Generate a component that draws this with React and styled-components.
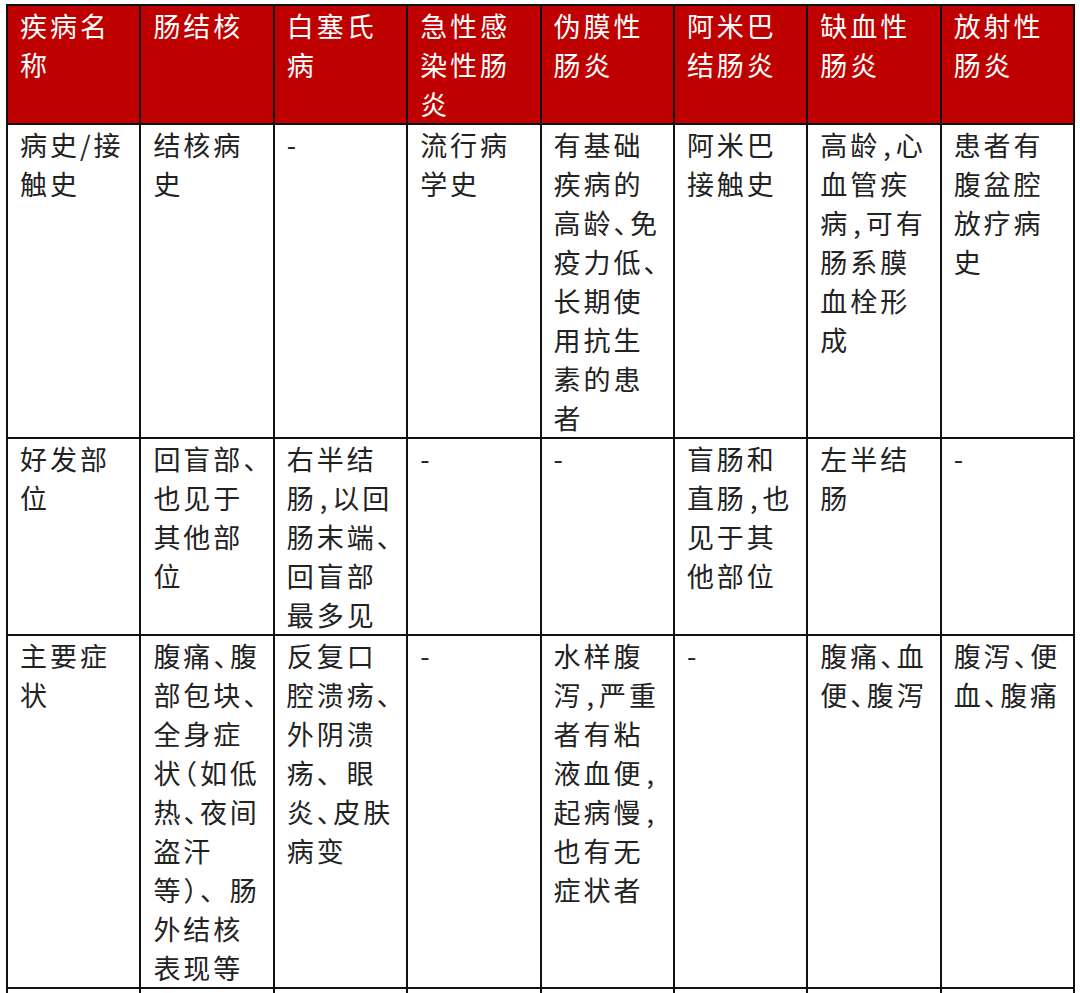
import React from "react";
import styled, { createGlobalStyle } from "styled-components";

const GlobalStyle = createGlobalStyle`
  html, body {
    margin: 0;
    padding: 0;
    background: #fff;
    overflow: hidden;
  }
  body {
    font-family: "Noto Sans CJK SC", "Noto Sans", sans-serif;
  }
`;

const headers = [
  ["疾病名", "称"],
  ["肠结核"],
  ["白塞氏", "病"],
  ["急性感", "染性肠", "炎"],
  ["伪膜性", "肠炎"],
  ["阿米巴", "结肠炎"],
  ["缺血性", "肠炎"],
  ["放射性", "肠炎"],
];

const rows = [
  [
    ["病史/接", "触史"],
    ["结核病", "史"],
    ["-"],
    ["流行病", "学史"],
    ["有基础", "疾病的", "高龄{、}免", "疫力低{、}", "长期使", "用抗生", "素的患", "者"],
    ["阿米巴", "接触史"],
    ["高龄{,}心", "血管疾", "病{,}可有", "肠系膜", "血栓形", "成"],
    ["患者有", "腹盆腔", "放疗病", "史"],
  ],
  [
    ["好发部", "位"],
    ["回盲部{、}", "也见于", "其他部", "位"],
    ["右半结", "肠{,}以回", "肠末端{、}", "回盲部", "最多见"],
    ["-"],
    ["-"],
    ["盲肠和", "直肠{,}也", "见于其", "他部位"],
    ["左半结", "肠"],
    ["-"],
  ],
  [
    ["主要症", "状"],
    ["腹痛{、}腹", "部包块{、}", "全身症", "状{（}如低", "热{、}夜间", "盗汗", "等{）}、肠", "外结核", "表现等"],
    ["反复口", "腔溃疡{、}", "外阴溃", "疡、眼", "炎{、}皮肤", "病变"],
    ["-"],
    ["水样腹", "泻{,}严重", "者有粘", "液血便{,}", "起病慢{,}", "也有无", "症状者"],
    ["-"],
    ["腹痛{、}血", "便{、}腹泻"],
    ["腹泻{、}便", "血{、}腹痛"],
  ],
  [[], [], [], [], [], [], [], []],
];

const Table = styled.table`
  margin: 4px 0 0 6px;
  width: 1069px;
  table-layout: fixed;
  border-collapse: collapse;
  border: 2px solid #111;
`;

const HeadCell = styled.th`
  background: #bf0000;
  color: #fff;
  font-weight: 400;
  text-align: left;
  vertical-align: top;
  border: 2px solid #111;
  padding: 0 10px 0 12px;
  font-size: 27px;
  line-height: 39px;
  letter-spacing: 3px;
  white-space: nowrap;
`;

const Cell = styled.td`
  color: #222;
  text-align: left;
  vertical-align: top;
  border: 2px solid #111;
  padding: 0 10px 0 12px;
  font-size: 27px;
  line-height: 39px;
  letter-spacing: 3px;
  white-space: nowrap;
  height: ${(p) => (p.$empty ? "60px" : "auto")};
`;

const Line = styled.div`
  height: 39px;
`;

const Narrow = styled.span`
  font-feature-settings: "halt" 1;
`;

const Comma = styled.span`
  padding: 0 2px 0 3px;
`;

function renderLine(text) {
  const parts = text.split(/(\{.\})/);
  return parts.map((part, i) => {
    const m = part.match(/^\{(.)\}$/);
    if (!m) return part;
    if (m[1] === ",") return <Comma key={i}>,</Comma>;
    return <Narrow key={i}>{m[1]}</Narrow>;
  });
}

function Lines({ lines }) {
  return lines.map((l, i) => <Line key={i}>{renderLine(l)}</Line>);
}

export default function App() {
  return (
    <>
      <GlobalStyle />
      <Table>
        <thead>
          <tr>
            {headers.map((h, i) => (
              <HeadCell key={i}>
                <Lines lines={h} />
              </HeadCell>
            ))}
          </tr>
        </thead>
        <tbody>
          {rows.map((row, r) => (
            <tr key={r}>
              {row.map((cell, c) => (
                <Cell key={c} $empty={cell.length === 0}>
                  <Lines lines={cell} />
                </Cell>
              ))}
            </tr>
          ))}
        </tbody>
      </Table>
    </>
  );
}
